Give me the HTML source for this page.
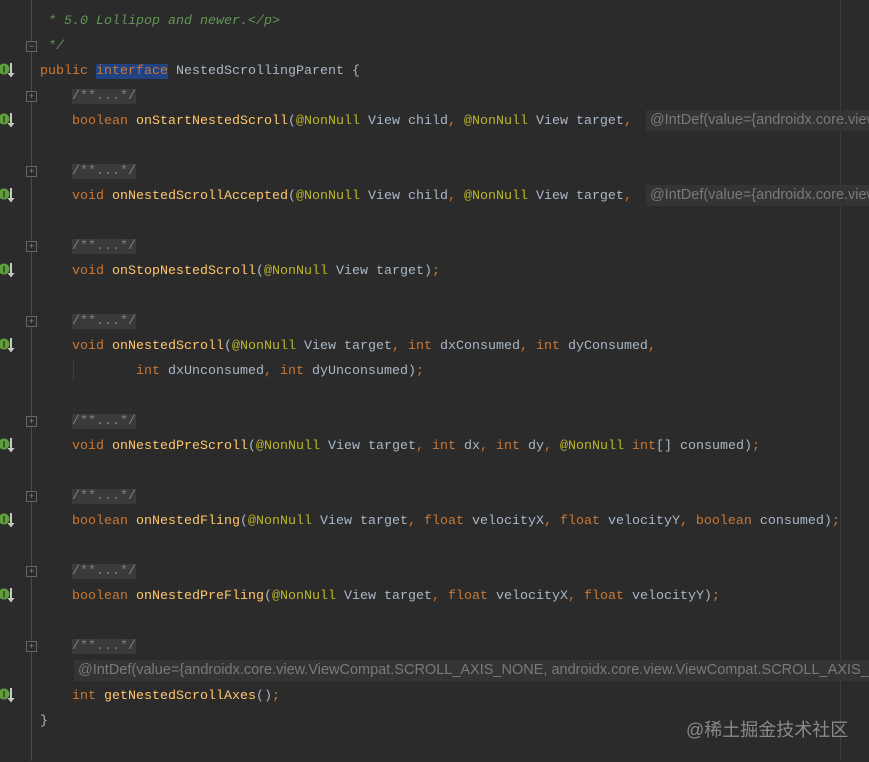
<!DOCTYPE html>
<html><head><meta charset="utf-8"><style>
html,body{margin:0;padding:0}
body{background:#2b2b2b;width:869px;height:761px;overflow:hidden;position:relative}
#w{position:absolute;left:0;top:1px;width:869px;height:761px;overflow:hidden}
.l{position:absolute;left:0;height:25px;line-height:25px;white-space:pre;font-family:"Liberation Mono",monospace;font-size:13.33px;color:#a9b7c6}
.k{color:#cc7832}.m{color:#ffc66d}.a{color:#bbb529}.c{color:#808080}.d{color:#629755;font-style:italic}
.f{background:#3a3a3a;color:#808080}
.h{display:inline-block;background:#333435;color:#7a7a7a;font-family:"Liberation Sans",sans-serif;font-size:14.5px;line-height:21px;padding:0 4px;margin-left:6px}
.gut{position:absolute;left:31px;top:0;width:1px;height:761px;background:#4a4a4a}
.rm{position:absolute;left:840px;top:0;width:1px;height:761px;background:#3c3c3c}
.fold{position:absolute;left:26px;width:9px;height:9px;border:1px solid #666;background:#2b2b2b;color:#888;font:9px/9px "Liberation Sans",sans-serif;text-align:center}
.ic{position:absolute;left:0;width:22px;height:16px}
.wm{position:absolute;left:686px;top:715px;color:#8a8a8a;font-family:"Liberation Sans","Noto Sans CJK SC",sans-serif;font-size:18px}
</style></head><body>
<div class="gut"></div><div class="rm"></div>
<div id="w">
<div class="l d" style="top:-18px;left:48px"> * that static methods. this enables interoperability with nested</div>
<div class="l d" style="top:8px;left:48px">* 5.0 Lollipop and newer.&lt;/p&gt;</div>
<div class="l d" style="top:33px;left:48px">*/</div>
<div class="l" style="top:58px;left:40px"><span class="k">public </span><span class="k" style="background:#214283">interface</span> NestedScrollingParent {</div>
<div class="l" style="top:83px;left:72px"><span class="f">/**...*/</span></div>
<div class="l" style="top:108px;left:72px"><span class="k">boolean </span><span class="m">onStartNestedScroll</span>(<span class="a">@NonNull</span> View child<span class="k">, </span><span class="a">@NonNull</span> View target<span class="k">,</span> <span class="h">@IntDef(value={androidx.core.view</span></div>
<div class="l" style="top:158px;left:72px"><span class="f">/**...*/</span></div>
<div class="l" style="top:183px;left:72px"><span class="k">void </span><span class="m">onNestedScrollAccepted</span>(<span class="a">@NonNull</span> View child<span class="k">, </span><span class="a">@NonNull</span> View target<span class="k">,</span> <span class="h">@IntDef(value={androidx.core.view</span></div>
<div class="l" style="top:233px;left:72px"><span class="f">/**...*/</span></div>
<div class="l" style="top:258px;left:72px"><span class="k">void </span><span class="m">onStopNestedScroll</span>(<span class="a">@NonNull</span> View target)<span class="k">;</span></div>
<div class="l" style="top:308px;left:72px"><span class="f">/**...*/</span></div>
<div class="l" style="top:333px;left:72px"><span class="k">void </span><span class="m">onNestedScroll</span>(<span class="a">@NonNull</span> View target<span class="k">, int </span>dxConsumed<span class="k">, int </span>dyConsumed<span class="k">,</span></div>
<div style="position:absolute;left:73px;top:358px;width:1px;height:22px;background:#3d3d3d"></div>
<div class="l" style="top:358px;left:136px"><span class="k">int </span>dxUnconsumed<span class="k">, int </span>dyUnconsumed)<span class="k">;</span></div>
<div class="l" style="top:408px;left:72px"><span class="f">/**...*/</span></div>
<div class="l" style="top:433px;left:72px"><span class="k">void </span><span class="m">onNestedPreScroll</span>(<span class="a">@NonNull</span> View target<span class="k">, int </span>dx<span class="k">, int </span>dy<span class="k">, </span><span class="a">@NonNull</span> <span class="k">int</span>[] consumed)<span class="k">;</span></div>
<div class="l" style="top:483px;left:72px"><span class="f">/**...*/</span></div>
<div class="l" style="top:508px;left:72px"><span class="k">boolean </span><span class="m">onNestedFling</span>(<span class="a">@NonNull</span> View target<span class="k">, float </span>velocityX<span class="k">, float </span>velocityY<span class="k">, boolean </span>consumed)<span class="k">;</span></div>
<div class="l" style="top:558px;left:72px"><span class="f">/**...*/</span></div>
<div class="l" style="top:583px;left:72px"><span class="k">boolean </span><span class="m">onNestedPreFling</span>(<span class="a">@NonNull</span> View target<span class="k">, float </span>velocityX<span class="k">, float </span>velocityY)<span class="k">;</span></div>
<div class="l" style="top:633px;left:72px"><span class="f">/**...*/</span></div>
<div class="l" style="top:658px;left:70px"><span class="h" style="margin-left:4px">@IntDef(value={androidx.core.view.ViewCompat.SCROLL_AXIS_NONE, androidx.core.view.ViewCompat.SCROLL_AXIS_HORIZONTAL, androidx</span></div>
<div class="l" style="top:683px;left:72px"><span class="k">int </span><span class="m">getNestedScrollAxes</span>()<span class="k">;</span></div>
<div class="l" style="top:708px;left:40px">}</div>

<div class="fold" style="top:40px">−</div>
<div class="fold" style="top:90px">+</div>
<div class="fold" style="top:165px">+</div>
<div class="fold" style="top:240px">+</div>
<div class="fold" style="top:315px">+</div>
<div class="fold" style="top:415px">+</div>
<div class="fold" style="top:490px">+</div>
<div class="fold" style="top:565px">+</div>
<div class="fold" style="top:640px">+</div>

<svg width="0" height="0" style="position:absolute"><defs><g id="ii"><circle cx="4" cy="7" r="5.5" fill="#5e9f3a"/><text x="4" y="10.5" font-family="Liberation Sans" font-size="9" font-weight="bold" fill="#2b2b2b" text-anchor="middle">I</text><path d="M11 1V13" stroke="#c8c8c8" stroke-width="2"/><path d="M7.5 11L11 15.5L14.5 11Z" fill="#c8c8c8"/></g></defs></svg>
<svg class="ic" style="top:61px"><use href="#ii"/></svg>
<svg class="ic" style="top:111px"><use href="#ii"/></svg>
<svg class="ic" style="top:186px"><use href="#ii"/></svg>
<svg class="ic" style="top:261px"><use href="#ii"/></svg>
<svg class="ic" style="top:336px"><use href="#ii"/></svg>
<svg class="ic" style="top:436px"><use href="#ii"/></svg>
<svg class="ic" style="top:511px"><use href="#ii"/></svg>
<svg class="ic" style="top:586px"><use href="#ii"/></svg>
<svg class="ic" style="top:686px"><use href="#ii"/></svg>
<div class="wm">@稀土掘金技术社区</div>
</div>
</body></html>
